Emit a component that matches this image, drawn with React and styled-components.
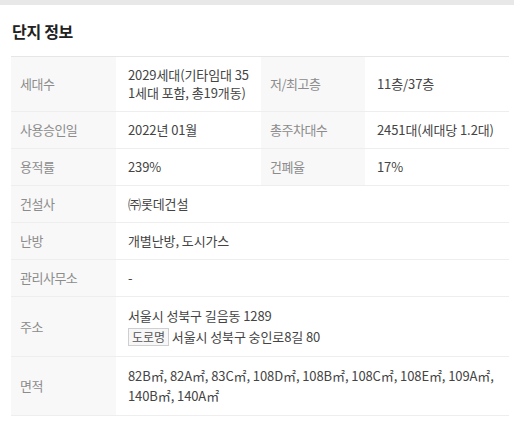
import React from "react";
import styled, { createGlobalStyle } from "styled-components";

const GlobalStyle = createGlobalStyle`
  body {
    margin: 0;
    background: #fff;
    font-family: "Noto Sans CJK KR", "Noto Sans", sans-serif;
    color: #444;
  }
`;

const TopBar = styled.div`
  height: 5px;
  background: #e8e8e8;
`;

const Section = styled.section`
  padding: 0 5px 0 11px;
`;

const Title = styled.h2`
  margin: 0;
  padding: 15px 0 14px 1px;
  font-size: 16px;
  line-height: 22px;
  font-weight: 700;
  color: #222;
  letter-spacing: -0.3px;
`;

const Table = styled.table`
  width: 498px;
  border-collapse: collapse;
  table-layout: fixed;
  border-top: 1px solid #e6e6e6;
  border-bottom: 1px solid #e6e6e6;
`;

const Row = styled.tr`
  border-bottom: 1px solid #eeeeee;
`;

const Label = styled.th`
  padding: 9px 9px;
  background: #f8f8f8;
  text-align: left;
  font-weight: 400;
  font-size: 13px;
  line-height: 18px;
  color: #8c8c8c;
  letter-spacing: -0.5px;
  vertical-align: middle;
`;

const Value = styled.td`
  padding: 9px 12px;
  font-size: 13px;
  line-height: ${(p) => (p.$tall ? "20px" : "18px")};
  color: #444;
  letter-spacing: -0.1px;
  word-break: break-all;
  vertical-align: middle;
`;

const RoadBadge = styled.span`
  display: inline-block;
  margin: 2px 3px 0 0;
  padding: 0 3px;
  border: 1px solid #cfcfcf;
  background: #f7f7f7;
  font-size: 12px;
  line-height: 16px;
  color: #555;
`;

const Area = styled.span`
  white-space: nowrap;
`;

const areas = [
  "82B㎡", "82A㎡", "83C㎡", "108D㎡", "108B㎡",
  "108C㎡", "108E㎡", "109A㎡", "140B㎡", "140A㎡",
];

export default function App() {
  return (
    <>
      <GlobalStyle />
      <TopBar />
      <Section>
        <Title>단지 정보</Title>
        <Table>
          <colgroup>
            <col style={{ width: 105 }} />
            <col style={{ width: 145 }} />
            <col style={{ width: 104 }} />
            <col />
          </colgroup>
          <tbody>
            <Row>
              <Label>세대수</Label>
              <Value>2029세대(기타임대 351세대 포함, 총19개동)</Value>
              <Label>저/최고층</Label>
              <Value>11층/37층</Value>
            </Row>
            <Row>
              <Label>사용승인일</Label>
              <Value>2022년 01월</Value>
              <Label>총주차대수</Label>
              <Value>2451대(세대당 1.2대)</Value>
            </Row>
            <Row>
              <Label>용적률</Label>
              <Value>239%</Value>
              <Label>건폐율</Label>
              <Value>17%</Value>
            </Row>
            <Row>
              <Label>건설사</Label>
              <Value colSpan={3}>㈜롯데건설</Value>
            </Row>
            <Row>
              <Label>난방</Label>
              <Value colSpan={3}>개별난방, 도시가스</Value>
            </Row>
            <Row>
              <Label>관리사무소</Label>
              <Value colSpan={3}>-</Value>
            </Row>
            <Row>
              <Label>주소</Label>
              <Value colSpan={3} $tall>
                서울시 성북구 길음동 1289
                <br />
                <RoadBadge>도로명</RoadBadge>서울시 성북구 숭인로8길 80
              </Value>
            </Row>
            <Row>
              <Label>면적</Label>
              <Value colSpan={3} $tall>
                {areas.map((a, i) => (
                  <React.Fragment key={a}>
                    <Area>
                      {a}
                      {i < areas.length - 1 ? "," : ""}
                    </Area>
                    {i < areas.length - 1 ? " " : ""}
                  </React.Fragment>
                ))}
              </Value>
            </Row>
          </tbody>
        </Table>
      </Section>
    </>
  );
}
